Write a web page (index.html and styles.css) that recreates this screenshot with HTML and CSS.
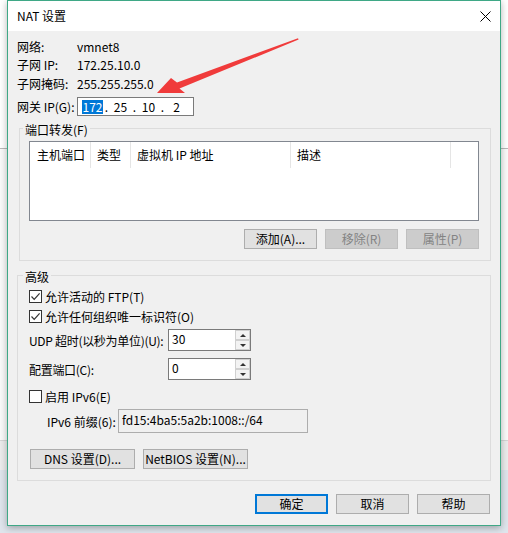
FILE: index.html
```html
<!DOCTYPE html>
<html lang="zh-CN">
<head>
    <meta charset="UTF-8">
    <title>NAT 设置</title>
    <link rel="stylesheet" href="styles.css">
</head>
<body>
    <div class="desk">
        <div class="dialog">
            <div class="titlebar">
                <span class="title">NAT 设置</span>
                <svg class="close" width="11" height="11" viewBox="0 0 11 11">
                    <path d="M0.5 0.5 L10.5 10.5 M10.5 0.5 L0.5 10.5" stroke="#000" stroke-width="1"/>
                </svg>
            </div>

            <div class="content">
                <div class="info">
                    <div class="row"><span class="key">网络:</span><span>vmnet8</span></div>
                    <div class="row"><span class="key">子网 IP:</span><span>172.25.10.0</span></div>
                    <div class="row r3"><span class="key">子网掩码:</span><span>255.255.255.0</span></div>
                    <div class="row gateway">
                        <span class="key">网关 IP(G):</span>
                        <div class="ipbox">
                            <span class="oct"><span class="sel">172</span></span><span class="dot">.</span>
                            <span class="oct">25</span><span class="dot">.</span>
                            <span class="oct">10</span><span class="dot">.</span>
                            <span class="oct">2</span>
                        </div>
                    </div>
                </div>

                <fieldset class="group ports">
                    <legend>端口转发(F)</legend>
                    <div class="listview">
                        <div class="lv-head">
                            <span class="col c1">主机端口</span>
                            <span class="col c2">类型</span>
                            <span class="col c3">虚拟机 IP 地址</span>
                            <span class="col c4">描述</span>
                        </div>
                    </div>
                    <div class="btnrow">
                        <button class="btn">添加(A)...</button>
                        <button class="btn" disabled>移除(R)</button>
                        <button class="btn" disabled>属性(P)</button>
                    </div>
                </fieldset>

                <fieldset class="group advanced">
                    <legend>高级</legend>
                    <div class="check"><span class="box"><svg width="11" height="11" viewBox="0 0 11 11"><path d="M1.5 5.5 L4.2 8.3 L9.6 2.4" fill="none" stroke="#333" stroke-width="1.2"/></svg></span>允许活动的 FTP(T)</div>
                    <div class="check"><span class="box"><svg width="11" height="11" viewBox="0 0 11 11"><path d="M1.5 5.5 L4.2 8.3 L9.6 2.4" fill="none" stroke="#333" stroke-width="1.2"/></svg></span>允许任何组织唯一标识符(O)</div>

                    <div class="field udp">
                        <span class="flabel">UDP 超时(以秒为单位)(U):</span>
                        <div class="spin">
                            <span class="spin-val">30</span>
                            <span class="spin-btns"><span class="up"></span><span class="down"></span></span>
                        </div>
                    </div>
                    <div class="field port">
                        <span class="flabel">配置端口(C):</span>
                        <div class="spin">
                            <span class="spin-val">0</span>
                            <span class="spin-btns"><span class="up"></span><span class="down"></span></span>
                        </div>
                    </div>

                    <div class="check ipv6"><span class="box"></span>启用 IPv6(E)</div>
                    <div class="field prefix">
                        <span class="plabel">IPv6 前缀(6):</span>
                        <div class="readonly">fd15:4ba5:5a2b:1008::/64</div>
                    </div>

                    <div class="btnrow left">
                        <button class="btn wide">DNS 设置(D)...</button>
                        <button class="btn wide">NetBIOS 设置(N)...</button>
                    </div>
                </fieldset>

                <div class="footer">
                    <button class="btn default">确定</button>
                    <button class="btn">取消</button>
                    <button class="btn">帮助</button>
                </div>
            </div>
        </div>

        <svg class="arrow" width="508" height="533" viewBox="0 0 508 533">
            <polygon points="157,93 171,78 177,82.5 298,38.2 298.6,39.6 179.5,88.5 185,93" fill="#f03b3b"/>
        </svg>
    </div>
</body>
</html>
```

FILE: styles.css
```css
body {
    margin: 0;
    font-family: "Noto Sans CJK SC", "Noto Sans", sans-serif;
    font-size: 12px;
    color: #000;
}

.desk {
    position: relative;
    width: 508px;
    height: 533px;
    box-sizing: border-box;
    padding-left: 7px;
    overflow: hidden;
    background: linear-gradient(to bottom,
        #ffffff 0 148px, #b8b8b8 148px 149px,
        #fafafa 149px 440px, #d6d6d6 440px 441px,
        #ececec 441px 470px, #dfe5ec 470px);
}

.dialog {
    width: 494px;
    height: 526px;
    box-sizing: border-box;
    border: 1px solid #3fa886;
    background-color: #f0f0f0;
    box-shadow: 0 2px 7px rgba(0, 0, 0, 0.3);
}

.titlebar {
    height: 30px;
    background-color: #fff;
    display: flex;
    align-items: center;
    justify-content: space-between;
    padding: 0 9px;
}

.title {
    line-height: 16px;
}

.content {
    padding: 7px 9px 0 9px;
}

/* top info rows */
.row {
    display: flex;
    height: 18px;
    line-height: 18px;
}

.r3 {
    margin-top: 1px;
}

.key {
    width: 60px;
    flex: none;
}

.gateway {
    margin-top: 4px;
    height: 19px;
    align-items: center;
}

.ipbox {
    width: 117px;
    height: 19px;
    box-sizing: border-box;
    border: 1px solid #7a7a7a;
    background-color: #fff;
    display: flex;
    align-items: center;
    padding-left: 3px;
    line-height: 17px;
}

.oct {
    width: 23px;
    text-align: center;
}

.dot {
    width: 5px;
    text-align: center;
}

.sel {
    display: inline-block;
    background-color: #0078d7;
    color: #fff;
    line-height: 14px;
    padding: 0 1px;
}

/* group boxes */
.group {
    border: 1px solid #dcdcdc;
    margin: 0;
    min-width: 0;
}

.group legend {
    padding: 4px 2px 0;
    margin-left: -6px;
    line-height: 16px;
}

.ports {
    margin: 2px 0 0 2px;
    padding: 3px 11px 11px 9px;
}

.advanced {
    margin: 4px 0 0 0;
    padding: 1px 11px 11px 11px;
}

.listview {
    height: 80px;
    box-sizing: border-box;
    border: 1px solid #828790;
    background-color: #fff;
}

.lv-head {
    display: flex;
    height: 26px;
    line-height: 26px;
}

.col {
    box-sizing: border-box;
    border-right: 1px solid #e5e5e5;
    padding-left: 6px;
    white-space: nowrap;
}

.c1 { width: 61px; padding-left: 7px; }
.c2 { width: 40px; }
.c3 { width: 160px; }
.c4 { width: 160px; }

.btnrow {
    display: flex;
    justify-content: flex-end;
    gap: 8px;
    margin-top: 8px;
}

.btnrow.left {
    justify-content: flex-start;
    margin-top: 16px;
    padding-left: 1px;
}

.btn {
    width: 73px;
    height: 20px;
    box-sizing: border-box;
    border: 1px solid #adadad;
    background-color: #e1e1e1;
    font-family: inherit;
    font-size: 12px;
    line-height: 16px;
    color: #000;
    padding: 0;
    margin: 0;
}

.btn:disabled {
    background-color: #cccccc;
    border-color: #bfbfbf;
    color: #838383;
}

.btn.wide {
    width: 105px;
}

.btn.default {
    border: 2px solid #0078d7;
}

/* checkboxes */
.check {
    display: flex;
    align-items: center;
    height: 20px;
}

.box {
    width: 13px;
    height: 13px;
    box-sizing: border-box;
    border: 1px solid #333;
    background-color: #fff;
    margin-right: 3px;
    display: flex;
    align-items: center;
    justify-content: center;
}

.check.ipv6 {
    margin-top: 6px;
}

/* labelled fields */
.field {
    display: flex;
    align-items: center;
}

.udp {
    margin-top: 3px;
}

.port {
    margin-top: 7px;
}

.flabel {
    width: 139px;
    flex: none;
    white-space: nowrap;
    letter-spacing: -0.3px;
}

.spin {
    width: 83px;
    height: 22px;
    box-sizing: border-box;
    border: 1px solid #7a7a7a;
    background-color: #fff;
    display: flex;
}

.spin-val {
    flex: 1;
    padding-left: 3px;
    line-height: 18px;
}

.spin-btns {
    width: 15px;
    display: flex;
    flex-direction: column;
}

.spin-btns span {
    flex: 1;
    box-sizing: border-box;
    border: 1px solid #d0d0d0;
    background-color: #f3f3f3;
    display: flex;
    align-items: center;
    justify-content: center;
}

.spin-btns span::after {
    content: "";
    border-left: 3px solid transparent;
    border-right: 3px solid transparent;
}

.spin-btns .up::after {
    border-bottom: 3px solid #333;
}

.spin-btns .down::after {
    border-top: 3px solid #333;
}

.prefix {
    margin-top: 3px;
    padding-left: 18px;
}

.plabel {
    width: 71px;
    flex: none;
    white-space: nowrap;
}

.readonly {
    width: 190px;
    height: 24px;
    box-sizing: border-box;
    border: 1px solid #adadad;
    background-color: #f0f0f0;
    padding-left: 3px;
    line-height: 20px;
}

.footer {
    display: flex;
    justify-content: flex-end;
    gap: 8px;
    margin: 13px 1px 0 0;
}

.arrow {
    position: absolute;
    left: 0;
    top: 0;
    pointer-events: none;
}
```
